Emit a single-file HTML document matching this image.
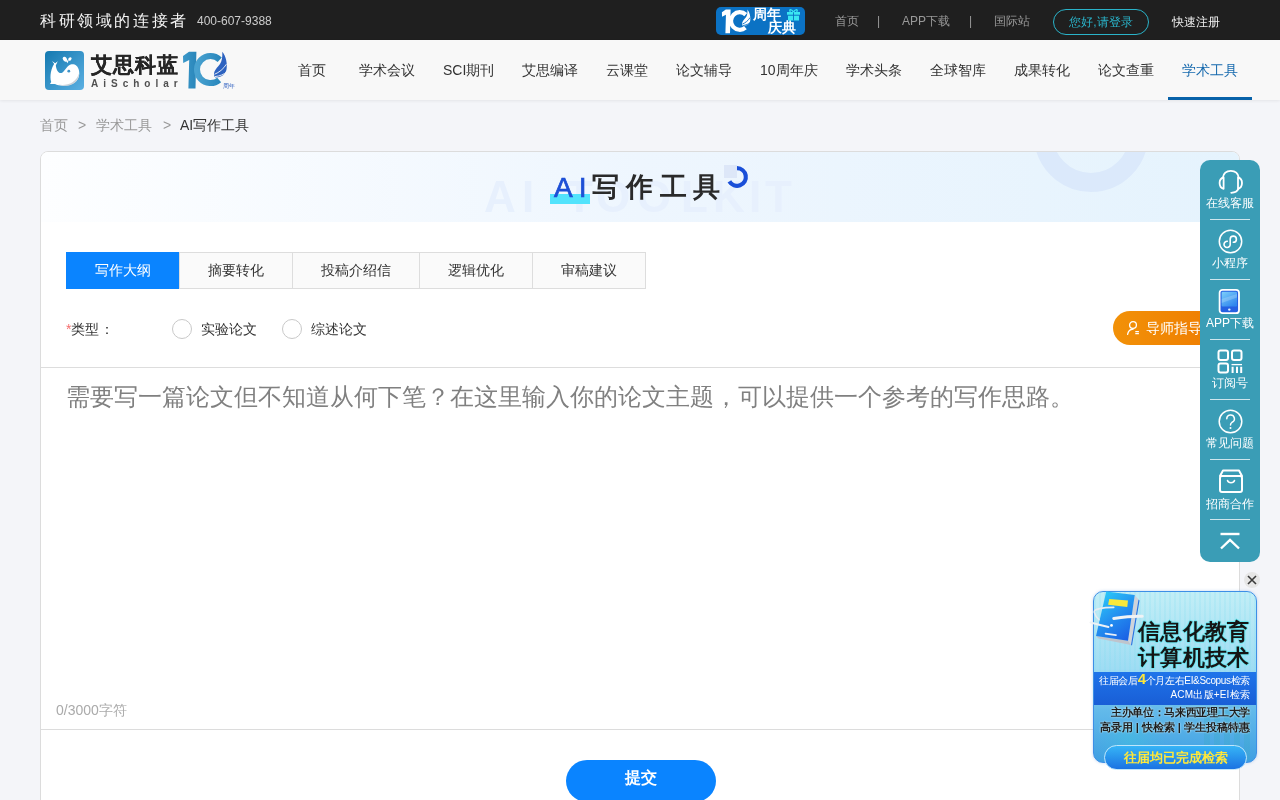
<!DOCTYPE html>
<html><head><meta charset="utf-8">
<style>
*{margin:0;padding:0;box-sizing:border-box}
html,body{width:1280px;height:800px;overflow:hidden}
body>*{will-change:transform}
body{font-family:"Liberation Sans",sans-serif;background:#f4f5f9;position:relative;color:#333}
.abs{position:absolute}
.t{position:absolute;white-space:nowrap}
#top{position:absolute;left:0;top:0;width:1280px;height:40px;background:#1f1f1f}
#nav{position:absolute;left:0;top:40px;width:1280px;height:60px;background:#f8f8f8;box-shadow:0 1px 3px rgba(0,0,0,.07)}
.navi{position:absolute;top:0;height:60px;line-height:60px;font-size:14px;color:#333;white-space:nowrap}
.tl{position:absolute;top:1px;height:40px;line-height:40px;font-size:12px;color:#999;white-space:nowrap}
.cr{position:absolute;top:116px;font-size:14px;color:#999;line-height:18px;white-space:nowrap}
#card{position:absolute;left:40px;top:151px;width:1200px;height:720px;background:#fff;border:1px solid #dcdcdc;border-radius:8px;overflow:hidden}
.tab{position:absolute;top:252px;height:37px;line-height:35px;text-align:center;font-size:14px;color:#333;border:1px solid #ddd;background:#fafafa}
#side{position:absolute;left:1200px;top:160px;width:60px;height:402px;background:#3a9db6;border-radius:10px}
.si{position:absolute;left:0;width:60px;text-align:center;color:#fff;font-size:12px;line-height:14px;white-space:nowrap}
.sd{position:absolute;left:10px;width:40px;height:1px;background:rgba(255,255,255,.75)}
.radio{position:absolute;top:319px;width:20px;height:20px;border:1px solid #c8c8c8;border-radius:50%;background:#fff}
</style></head><body>
<div id="top">
  <div class="tl" style="left:40px;color:#f4f4f4;font-family:'Liberation Serif',serif;font-size:16px;letter-spacing:2.6px">科研领域的连接者</div>
  <div class="tl" style="left:197px;color:#ccc">400-607-9388</div>
  <div class="abs" style="left:716px;top:7px;width:89px;height:28px;background:#0b72c4;border-radius:5px;overflow:hidden">
    <svg class="abs" style="left:0;top:0" width="40" height="28" viewBox="0 0 40 28"><g transform="translate(3.95 0.61) scale(0.65)">
    <path d="M3 7 L9 2.75 L16.4 2.75 L15.5 39.5 L8.4 39.5 L9.2 11 L3.2 14 Z" fill="#fff"/>
    <path d="M39.71 10.73 A13.5 13.5 0 1 0 39.18 30.94" fill="none" stroke="#fff" stroke-width="6.5"/>
    <path d="M42.3 2.75 C46 7 47.5 15 46.6 20 C45.8 25 42 28.6 35.4 28.4 C33.8 27.5 33.6 24.5 34.5 22.5 C35.5 20 38 17.5 40 15 C41.8 12.5 42.6 8 42.3 2.75 Z" fill="#fff"/>
    <path d="M34.5 25.3 C39 23.5 43.5 20 46.4 15.2" fill="none" stroke="#0b72c4" stroke-width="1.4"/>
    <path d="M35 27.6 C40 27 44 25.5 46.8 22.8" fill="none" stroke="#0b72c4" stroke-width="1.4"/>
    </g></svg>
    <div class="t" style="left:37px;top:0px;font-size:13.5px;font-weight:bold;line-height:16px;color:#fff">周年</div>
    <div class="t" style="left:52px;top:13px;font-size:13.5px;font-weight:bold;line-height:16px;color:#fff">庆典</div>
    <svg class="abs" style="left:70px;top:1px" width="15" height="13" viewBox="0 0 15 13"><rect x="1" y="4" width="13" height="3.2" fill="#3ae6f2"/><rect x="2" y="7.2" width="11" height="5.3" fill="#3ae6f2"/><path d="M7.5 4 V12.5 M1 7.2 H14" stroke="#0b72c4" stroke-width="0.9"/><path d="M7.5 4 C5 0.5 2.5 1.5 4.5 3.8 M7.5 4 C10 0.5 12.5 1.5 10.5 3.8" fill="none" stroke="#3ae6f2" stroke-width="1.3"/></svg>
  </div>
  <div class="tl" style="left:835px">首页</div>
  <div class="tl" style="left:877px">|</div>
  <div class="tl" style="left:902px">APP下载</div>
  <div class="tl" style="left:969px">|</div>
  <div class="tl" style="left:994px">国际站</div>
  <div class="abs" style="left:1053px;top:9px;width:96px;height:26px;border:1px solid #2ab3c9;border-radius:13px;color:#2ab3c9;font-size:12px;line-height:24px;text-align:center">您好,请登录</div>
  <div class="tl" style="left:1172px;color:#eee;top:2px">快速注册</div>
</div>
<div id="nav">
  <svg class="abs" style="left:45px;top:10.5px" width="39" height="39" viewBox="0 0 39 39">
    <defs><linearGradient id="lg1" x1="0" y1="0" x2="1" y2="1"><stop offset="0" stop-color="#1479b0"/><stop offset="1" stop-color="#5cb0e2"/></linearGradient></defs>
    <rect x="0" y="0" width="39" height="39" rx="4" fill="url(#lg1)"/>
    <path d="M9.8 12 C6 17 4.5 25 6.2 31 L5 33 L10 33 C14 35 22 35.5 28 32.5 C33 30 35 25 34 19.5 C33 14.5 29.5 12.8 26.5 13.3 C22.5 14 20.5 19 17.5 21.5 C14.5 23.5 11 20 10.8 13.5 Z" fill="#fff"/>
    <path d="M13 33.6 C22 35.2 31 32 34.2 22 C34 28 30.5 33 24 34.5 C20 35.2 16.5 34.8 13 33.6Z" fill="#cdd2d8"/>
    <path d="M7 10 L10.2 12.2 L12.8 10.3 L11 14 L9.8 13.8 Z" fill="#fff"/>
    <circle cx="23.8" cy="20.2" r="1.4" fill="#3d93c8"/>
    <ellipse cx="19.9" cy="8.2" rx="1.9" ry="2.7" transform="rotate(-35 19.9 8.2)" fill="#fff"/><ellipse cx="24.9" cy="8" rx="1.4" ry="2" transform="rotate(40 24.9 8)" fill="#fff"/><path d="M20.8 9.5 L22.4 12.2 L23.8 9.3 Z" fill="#fff"/>
  </svg>
  <div class="t" style="left:91px;top:12px;font-size:21px;font-weight:bold;line-height:26px;color:#262626;letter-spacing:1px;-webkit-text-stroke:0.2px #262626">艾思科蓝</div>
  <div class="t" style="left:91px;top:38px;font-size:10px;line-height:12px;color:#505050;letter-spacing:5px;font-weight:bold">AiScholar</div>
  <svg class="abs" style="left:180px;top:9px" width="58" height="42" viewBox="0 0 58 42">
    <defs><linearGradient id="lg2" x1="0" y1="0" x2="1" y2="0"><stop offset="0" stop-color="#49a2d0"/><stop offset="1" stop-color="#2a88bd"/></linearGradient>
    <linearGradient id="lg4" x1="0" y1="0" x2="1" y2="0"><stop offset="0" stop-color="#3b98c9"/><stop offset="1" stop-color="#2a86ba"/></linearGradient></defs>
    <path d="M3 7 L9 2.75 L16.4 2.75 L15.5 39.5 L8.4 39.5 L9.2 11 L3.2 14 Z" fill="url(#lg4)"/>
    <path d="M39.71 10.73 A13.5 13.5 0 1 0 39.18 30.94" fill="none" stroke="url(#lg2)" stroke-width="6"/>
    <path d="M42.3 2.75 C46 7 47.5 15 46.6 20 C45.8 25 42 28.6 35.4 28.4 C33.8 27.5 33.6 24.5 34.5 22.5 C35.5 20 38 17.5 40 15 C41.8 12.5 42.6 8 42.3 2.75 Z" fill="#2d62c0"/>
    <path d="M34.5 25.3 C39 23.5 43.5 20 46.4 15.2" fill="none" stroke="#f8f8f8" stroke-width="0.9"/>
    <path d="M35 27.6 C40 27 44 25.5 46.8 22.8" fill="none" stroke="#f8f8f8" stroke-width="0.9"/>
  </svg>
  <div class="t" style="left:223px;top:42px;font-size:6px;line-height:8px;color:#3060c0">周年</div>

  <div class="navi" style="left:298px">首页</div>
  <div class="navi" style="left:359px">学术会议</div>
  <div class="navi" style="left:443px">SCI期刊</div>
  <div class="navi" style="left:522px">艾思编译</div>
  <div class="navi" style="left:606px">云课堂</div>
  <div class="navi" style="left:676px">论文辅导</div>
  <div class="navi" style="left:760px">10周年庆</div>
  <div class="navi" style="left:846px">学术头条</div>
  <div class="navi" style="left:930px">全球智库</div>
  <div class="navi" style="left:1014px">成果转化</div>
  <div class="navi" style="left:1098px">论文查重</div>
  <div class="navi" style="left:1182px;color:#176aae">学术工具</div>
  <div class="abs" style="left:1168px;top:57px;width:84px;height:3px;background:#0862a9"></div>
</div>
<div class="cr" style="left:40px">首页</div>
<div class="cr" style="left:78px">&gt;</div>
<div class="cr" style="left:96px">学术工具</div>
<div class="cr" style="left:163px">&gt;</div>
<div class="cr" style="left:180px;color:#333">AI写作工具</div>

<div id="card">
  <div class="abs" style="left:0;top:0;width:1200px;height:70px;background:linear-gradient(90deg,#fdfeff 0%,#eef6fe 50%,#e5f3fd 100%)"></div>
  <div class="abs" style="left:993px;top:-74px;width:114px;height:114px;border-radius:50%;border:19px solid #dbe9fb"></div>
  <div class="t" style="left:443px;top:21px;width:28px;text-align:center;font-size:44px;font-weight:bold;color:#e7f0fd;line-height:48px">A</div><div class="t" style="left:481px;top:21px;width:6px;text-align:center;font-size:44px;font-weight:bold;color:#e7f0fd;line-height:48px">I</div><div class="t" style="left:525px;top:21px;width:24px;text-align:center;font-size:44px;font-weight:bold;color:#e7f0fd;line-height:48px">T</div><div class="t" style="left:555px;top:21px;width:31px;text-align:center;font-size:44px;font-weight:bold;color:#e7f0fd;line-height:48px">O</div><div class="t" style="left:596px;top:21px;width:31px;text-align:center;font-size:44px;font-weight:bold;color:#e7f0fd;line-height:48px">O</div><div class="t" style="left:640px;top:21px;width:22px;text-align:center;font-size:44px;font-weight:bold;color:#e7f0fd;line-height:48px">L</div><div class="t" style="left:672px;top:21px;width:27px;text-align:center;font-size:44px;font-weight:bold;color:#e7f0fd;line-height:48px">K</div><div class="t" style="left:708px;top:21px;width:5px;text-align:center;font-size:44px;font-weight:bold;color:#e7f0fd;line-height:48px">I</div><div class="t" style="left:724px;top:21px;width:24px;text-align:center;font-size:44px;font-weight:bold;color:#e7f0fd;line-height:48px">T</div>
  <div class="abs" style="left:509px;top:42px;width:40px;height:10px;background:#52e3fc"></div>
  <div class="t" style="left:513px;top:19px;font-size:28px;letter-spacing:6px;line-height:34px;color:#1d4fd6;-webkit-text-stroke:0.7px #1d4fd6">AI</div>
  <div class="t" style="left:551px;top:18px;font-size:27px;font-weight:bold;letter-spacing:6.8px;line-height:34px;color:#2a2a2a">写作工具</div>
  <div class="abs" style="left:683px;top:13px;width:13px;height:13px;background:#dde7f8"></div>
  <svg class="abs" style="left:684px;top:13px" width="24" height="24" viewBox="0 0 24 24"><path d="M12 3.2 A8.8 8.8 0 1 1 4.4 16.4" fill="none" stroke="#1a4fd8" stroke-width="4.2"/></svg>
  <div class="abs" style="left:0;top:215px;width:1200px;height:1px;background:#ddd"></div>
  <div class="abs" style="left:0;top:577px;width:1200px;height:1px;background:#dcdcdc"></div>
</div>

<div class="tab" style="left:66px;width:114px;background:#0a84ff;color:#fff;border-color:#0a84ff">写作大纲</div>
<div class="tab" style="left:179px;width:114px">摘要转化</div>
<div class="tab" style="left:292px;width:128px">投稿介绍信</div>
<div class="tab" style="left:419px;width:114px">逻辑优化</div>
<div class="tab" style="left:532px;width:114px">审稿建议</div>

<div class="t" style="left:66px;top:320px;font-size:14px;line-height:18px;color:#333"><span style="color:#f56c6c">*</span>类型<span style="margin-left:1px">：</span></div>
<div class="radio" style="left:172px"></div>
<div class="t" style="left:201px;top:320px;font-size:14px;line-height:18px;color:#333">实验论文</div>
<div class="radio" style="left:282px"></div>
<div class="t" style="left:311px;top:320px;font-size:14px;line-height:18px;color:#333">综述论文</div>

<div class="abs" style="left:1113px;top:311px;width:120px;height:34px;border-radius:17px;background:linear-gradient(90deg,#f29108,#ee7a00)"></div>
<svg class="abs" style="left:1126px;top:320px" width="15" height="16" viewBox="0 0 15 16"><circle cx="7" cy="5" r="3.4" fill="none" stroke="#fff" stroke-width="1.3"/><path d="M1.6 14.3 C2.2 11 4.3 9.2 7.2 9" fill="none" stroke="#fff" stroke-width="1.3" stroke-linecap="round"/><path d="M9.3 11.6 h3.6 M9.3 13.6 h3.6" stroke="#fff" stroke-width="1.2"/></svg>
<div class="t" style="left:1146px;top:319px;font-size:14px;line-height:18px;color:#fff">导师指导</div>

<div class="t" style="left:66px;top:382px;font-size:24px;line-height:30px;color:#808080">需要写一篇论文但不知道从何下笔？在这里输入你的论文主题，可以提供一个参考的写作思路。</div>
<div class="t" style="left:56px;top:701px;font-size:14px;line-height:18px;color:#aaa">0/3000字符</div>

<div class="abs" style="left:566px;top:760px;width:150px;height:42px;border-radius:21px;background:#0a84ff;color:#fff;font-size:16px;font-weight:bold;text-align:center;line-height:35px">提交</div>

<div id="side">
  <svg class="abs" style="left:18px;top:10px" width="26" height="25" viewBox="0 0 26 25"><path d="M4.8 7.8 C5.5 3.2 8.5 0.9 12.8 0.9 C17.1 0.9 20.1 3.2 20.8 7.8" fill="none" stroke="#fff" stroke-width="1.8"/><path d="M5.6 7.4 C2.6 8.2 1.6 10.2 1.6 13 C1.6 15.9 2.6 18 5.6 18.8 Z" fill="none" stroke="#fff" stroke-width="1.8" stroke-linejoin="round"/><path d="M20 7.4 C23 8.2 24 10.2 24 13 C24 15.9 23 18 20 18.8 Z" fill="none" stroke="#fff" stroke-width="1.8" stroke-linejoin="round"/><path d="M20.4 18.8 C19.4 21.2 17 22.5 13.2 22.8" fill="none" stroke="#fff" stroke-width="1.8" stroke-linecap="round"/></svg>
  <div class="si" style="top:36px">在线客服</div>
  <div class="sd" style="top:59px"></div>
  <svg class="abs" style="left:18px;top:69px" width="25" height="25" viewBox="0 0 25 25"><circle cx="12.5" cy="12.5" r="11.2" fill="none" stroke="#fff" stroke-width="1.5"/><path d="M9.3 12.3 A3.1 3.1 0 1 0 12.2 15.4 V10.2 A3.1 3.1 0 1 1 15.3 13.3" fill="none" stroke="#fff" stroke-width="1.6" stroke-linecap="round"/></svg>
  <div class="si" style="top:96px">小程序</div>
  <div class="sd" style="top:119px"></div>
  <svg class="abs" style="left:18px;top:128px" width="23" height="27" viewBox="0 0 23 27"><defs><linearGradient id="tg" x1="0" y1="0" x2="0.7" y2="1"><stop offset="0" stop-color="#7ed0fa"/><stop offset="1" stop-color="#2f86ee"/></linearGradient></defs><rect x="1.6" y="1.8" width="19.4" height="23.4" rx="3" fill="#2460e2" stroke="#fff" stroke-width="1.8"/><rect x="3.6" y="3.8" width="15.4" height="14.7" rx="1" fill="url(#tg)"/><path d="M3.6 11 L19 6 V9.5 L3.6 15Z" fill="#fff" opacity=".2"/><circle cx="11.3" cy="21.6" r="1.2" fill="#e0eeff"/></svg>
  <div class="si" style="top:156px">APP下载</div>
  <div class="sd" style="top:179px"></div>
  <svg class="abs" style="left:17px;top:189px" width="26" height="25" viewBox="0 0 26 25"><rect x="1.5" y="1.5" width="9.5" height="9.5" rx="2" fill="none" stroke="#fff" stroke-width="2"/><rect x="15" y="1.5" width="9.5" height="9.5" rx="2" fill="none" stroke="#fff" stroke-width="2"/><rect x="1.5" y="14.5" width="9.5" height="9" rx="2" fill="none" stroke="#fff" stroke-width="2"/><path d="M14.5 15.6 H25" fill="none" stroke="#fff" stroke-width="1.3"/><path d="M15.6 17.8 V24 M20 17.8 V24 M24.2 17.8 V24" fill="none" stroke="#fff" stroke-width="2"/></svg>
  <div class="si" style="top:216px">订阅号</div>
  <div class="sd" style="top:239px"></div>
  <svg class="abs" style="left:18px;top:249px" width="25" height="25" viewBox="0 0 25 25"><circle cx="12.5" cy="12.5" r="11.3" fill="none" stroke="#fff" stroke-width="1.5"/><path d="M8.8 9.8 A3.8 3.8 0 1 1 14 13.3 C12.8 14 12.5 14.8 12.5 16" fill="none" stroke="#fff" stroke-width="1.5" stroke-linecap="round"/><circle cx="12.5" cy="19" r="1" fill="#fff"/></svg>
  <div class="si" style="top:276px">常见问题</div>
  <div class="sd" style="top:299px"></div>
  <svg class="abs" style="left:18px;top:309px" width="26" height="24" viewBox="0 0 26 24"><path d="M2 7 L5 1.5 H21 L24 7 Z" fill="none" stroke="#fff" stroke-width="2" stroke-linejoin="round"/><rect x="2" y="7" width="22" height="16" rx="2" fill="none" stroke="#fff" stroke-width="2"/><path d="M9.5 11.5 C10.5 14.5 15.5 14.5 16.5 11.5" fill="none" stroke="#fff" stroke-width="1.6" stroke-linecap="round"/></svg>
  <div class="si" style="top:337px">招商合作</div>
  <div class="sd" style="top:359px"></div>
  <svg class="abs" style="left:19px;top:372px" width="22" height="18" viewBox="0 0 22 18"><path d="M1.5 2 H20.5" stroke="#fff" stroke-width="2.4"/><path d="M2 16.5 L11 8 L20 16.5" fill="none" stroke="#fff" stroke-width="2.4"/></svg>
</div>

<div class="abs" style="left:1244px;top:572px;width:16px;height:16px;border-radius:50%;background:#e6e6e6"></div>
<svg class="abs" style="left:1246px;top:574px" width="12" height="12" viewBox="0 0 12 12"><path d="M2 2 L10 10 M10 2 L2 10" stroke="#3a3a3a" stroke-width="1.6"/></svg>
<div id="ad" class="abs" style="left:1093px;top:591px;width:164px;height:172px;border-radius:10px;border:1.5px solid #3d8fe6;overflow:hidden;box-shadow:0 0 3px rgba(70,130,210,.35);background:linear-gradient(180deg,#c2eef6 0%,#9fdcf3 45%,#62b9ea 70%,#3f9fe2 100%)">
  <div class="abs" style="left:0;top:0;width:164px;height:80px;background:repeating-linear-gradient(90deg,rgba(120,220,240,.18) 0 2px,rgba(255,255,255,0) 2px 5px)"></div>
  <div class="abs" style="left:0;top:80px;width:164px;height:33px;background:linear-gradient(180deg,#1f74ea,#195ed6)"></div>
  <div class="abs" style="left:110px;top:118px;width:50px;height:50px;background:repeating-linear-gradient(90deg,rgba(60,170,200,.35) 0 6px,rgba(255,255,255,0) 6px 10px)"></div>
  <div class="abs" style="left:0;top:132px;width:90px;height:40px;background:radial-gradient(circle at 40% 40%,rgba(60,200,220,.4),rgba(60,200,220,0) 60%)"></div>
</div>
<svg class="abs" style="left:1088px;top:588px" width="60" height="62" viewBox="0 0 60 62">
  <defs><linearGradient id="bk" x1="0.2" y1="0" x2="0.8" y2="1"><stop offset="0" stop-color="#2bcaf8"/><stop offset="0.5" stop-color="#2390f0"/><stop offset="1" stop-color="#1a5fe4"/></linearGradient></defs>
  <path d="M46.75 7 L50.5 11.5 L43 57 L40 52.75 Z" fill="#cfd3da"/>
  <path d="M8 48 L40 52.75 L43 57 L10.5 50.5 Z" fill="#bfc4cc"/>
  <path d="M50.5 11.5 L51.5 12.5 L44 57.5 L43 57 Z" fill="#2a6fe0"/>
  <path d="M18.25 3.6 L46.75 7 L40 52.75 L8 48 Z" fill="url(#bk)"/>
  <path d="M21.25 11.1 L40 12.6 L39.25 19 L20.1 16.75 Z" fill="#f8e83a"/>
  <path d="M25.75 19.4 C15 19.5 5 21 6.25 24.25 C7 27 9 30 11 31.75" fill="none" stroke="#e6ecf2" stroke-width="1.6" stroke-linecap="round"/>
  <path d="M2.5 34.5 C8 36 14 37.5 20.5 38.9" fill="none" stroke="#eef2f6" stroke-width="2" stroke-linecap="round"/>
  <circle cx="23.5" cy="37.4" r="1.4" fill="#fff"/>
  <path d="M25.75 30.4 C35 29 45 27.8 54.25 28.2" fill="none" stroke="#f0f3f6" stroke-width="3" stroke-linecap="round"/>
  <path d="M17.5 45.6 L28 47.1" stroke="#e6eef8" stroke-width="1.6" stroke-linecap="round"/>
</svg>
<div class="t" style="left:1138px;top:618px;font-size:22px;letter-spacing:0.3px;font-weight:bold;line-height:28px;color:#151515;text-shadow:1px 0 0 #6fe6f0,-1px 0 0 #6fe6f0,0 1px 0 #6fe6f0,0 -1px 0 #6fe6f0,0 0 3px #8ff0f6">信息化教育</div>
<div class="t" style="left:1138px;top:644px;font-size:22px;letter-spacing:0.3px;font-weight:bold;line-height:28px;color:#151515;text-shadow:1px 0 0 #6fe6f0,-1px 0 0 #6fe6f0,0 1px 0 #6fe6f0,0 -1px 0 #6fe6f0,0 0 3px #8ff0f6">计算机技术</div>
<div class="t" style="left:1090px;top:674px;font-size:10px;line-height:14px;color:#fff;width:160px;text-align:right;letter-spacing:-0.35px">往届会后<span style="color:#fde63a;font-size:15px;font-weight:bold;line-height:10px">4</span>个月左右EI&amp;Scopus检索</div>
<div class="t" style="left:1097px;top:688px;font-size:10px;letter-spacing:0.2px;line-height:14px;color:#fff;width:153px;text-align:right">ACM出版+EI检索</div>
<div class="t" style="left:1097px;top:705px;font-size:11px;letter-spacing:-0.3px;font-weight:bold;line-height:15px;color:#1e1e1e;width:153px;text-align:right;text-shadow:0 0 2px #e8fbff">主办单位：马来西亚理工大学</div>
<div class="t" style="left:1097px;top:720px;font-size:11px;font-weight:bold;line-height:15px;color:#1e1e1e;width:153px;text-align:right;text-shadow:0 0 2px #e8fbff">高录用 | 快检索 | 学生投稿特惠</div>
<div class="abs" style="left:1104px;top:745px;width:143px;height:25px;border-radius:13px;background:linear-gradient(180deg,#36b4f6,#1b73e2);border:1.5px solid #bfe6fb;color:#ffe83a;font-size:13px;font-weight:bold;text-align:center;line-height:23px">往届均已完成检索</div>
</body></html>
